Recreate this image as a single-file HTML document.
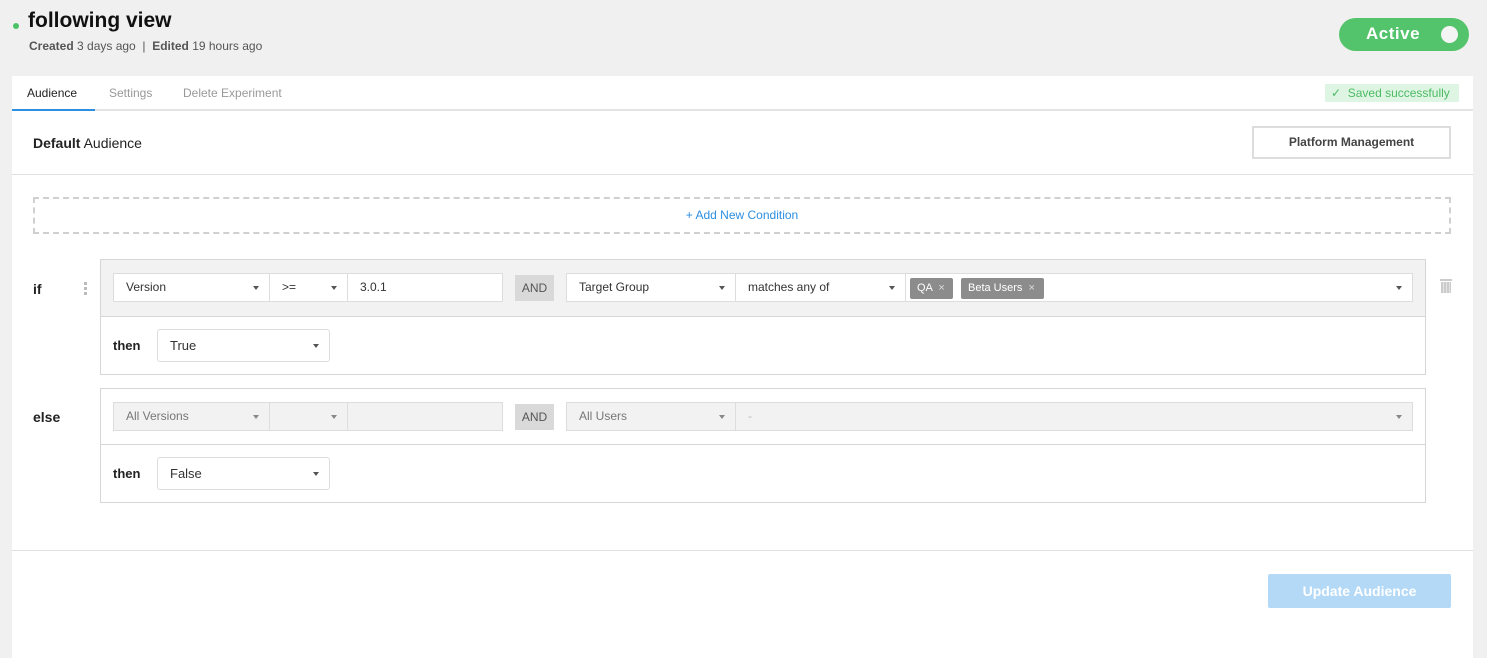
<!DOCTYPE html>
<html><head><style>
*{box-sizing:border-box;margin:0;padding:0}
body{width:1487px;height:658px;background:#f0f0f0;font-family:"Liberation Sans",sans-serif;position:relative;overflow:hidden;color:#222}
.a{position:absolute}
.sel{position:absolute;background:#fff;border:1px solid #ddd;height:29px;font-size:12px;color:#333;line-height:27px;padding-left:12px}
.sel.dis{background:#f2f2f2;color:#777}
.car{position:absolute;right:10px;top:12px;width:0;height:0;border-left:3.5px solid transparent;border-right:3.5px solid transparent;border-top:4px solid #555}
.dis .car{border-top-color:#888}
.and{position:absolute;background:#d9d9d9;color:#555;font-size:12px;width:39px;height:26px;line-height:26px;text-align:center}
.tag{position:absolute;top:4px;height:21px;background:#8c8c8c;color:#fff;font-size:11px;line-height:21px;padding-left:7px;border-radius:2px}
.lbl{position:absolute;font-size:13px;font-weight:bold;color:#222}
</style></head><body>
<div class="a" style="left:13px;top:23px;width:6px;height:6px;border-radius:50%;background:#4cc264"></div>
<div class="a" style="left:28px;top:9px;font-size:21px;font-weight:bold;color:#111">following view</div>
<div class="a" style="left:29px;top:39px;font-size:12px;color:#555"><b>Created</b> 3 days ago &nbsp;| &nbsp;<b>Edited</b> 19 hours ago</div>
<div class="a" style="left:1339px;top:18px;width:130px;height:33px;border-radius:17px;background:#54c46c"></div>
<div class="a" style="left:1366px;top:24px;font-size:17px;line-height:20px;font-weight:bold;color:#fff;letter-spacing:0.5px">Active</div>
<div class="a" style="left:1441px;top:26px;width:17px;height:17px;border-radius:50%;background:#f4f4f4"></div>

<div class="a" style="left:12px;top:76px;width:1461px;height:582px;background:#fff"></div>
<div class="a" style="left:12px;top:109px;width:1461px;height:2px;background:#e3e3e3"></div>
<div class="a" style="left:12px;top:109px;width:83px;height:2px;background:#2c8fe0"></div>
<div class="a" style="left:27px;top:86px;font-size:12px;color:#222">Audience</div>
<div class="a" style="left:109px;top:86px;font-size:12px;color:#999">Settings</div>
<div class="a" style="left:183px;top:86px;font-size:12px;color:#999">Delete Experiment</div>
<div class="a" style="left:1325px;top:84px;width:134px;height:18px;background:#dff5e4;font-size:12px;color:#4cba62;line-height:18px;padding-left:6px">✓&nbsp; Saved successfully</div>

<div class="a" style="left:33px;top:135px;font-size:14px;color:#222"><b>Default</b> Audience</div>
<div class="a" style="left:1252px;top:126px;width:199px;height:33px;border:2px solid #ddd;font-size:12px;font-weight:bold;color:#444;text-align:center;line-height:29px">Platform Management</div>
<div class="a" style="left:12px;top:174px;width:1461px;height:1px;background:#e0e0e0"></div>

<div class="a" style="left:33px;top:197px;width:1418px;height:37px;border:2px dashed #d0d0d0;text-align:center;line-height:33px;font-size:12px;color:#2c8fe0">+ Add New Condition</div>

<div class="lbl" style="left:33px;top:281px;font-size:14px">if</div>
<div class="a" style="left:84px;top:282px;width:3px;height:14px;background:repeating-linear-gradient(#bbb 0 3px,transparent 3px 5px)"></div>
<div class="a" style="left:100px;top:259px;width:1326px;height:116px;border:1px solid #d6d6d6;background:#fff"></div>
<div class="a" style="left:101px;top:260px;width:1324px;height:57px;background:#f2f2f2;border-bottom:1px solid #d6d6d6"></div>
<div class="sel" style="left:113px;top:273px;width:157px">Version<span class="car"></span></div>
<div class="sel" style="left:269px;top:273px;width:79px">&gt;=<span class="car"></span></div>
<div class="sel" style="left:347px;top:273px;width:156px">3.0.1</div>
<div class="and" style="left:515px;top:275px">AND</div>
<div class="sel" style="left:566px;top:273px;width:170px">Target Group<span class="car"></span></div>
<div class="sel" style="left:735px;top:273px;width:171px">matches any of<span class="car"></span></div>
<div class="sel" style="left:905px;top:273px;width:508px;padding-left:0">
<span class="tag" style="left:4px;width:43px">QA <span style="color:#ddd;margin-left:3px">×</span></span>
<span class="tag" style="left:55px;width:83px">Beta Users <span style="color:#ddd;margin-left:3px">×</span></span>
<span class="car"></span></div>
<div class="a" style="left:1440px;top:279px;width:12px;height:2px;background:#ccc"></div>
<div class="a" style="left:1441px;top:282px;width:10px;height:11px;background:repeating-linear-gradient(90deg,#ccc 0 2px,#e2e2e2 2px 3px)"></div>
<div class="lbl" style="left:113px;top:338px">then</div>
<div class="sel" style="left:157px;top:329px;width:173px;height:33px;line-height:31px;font-size:13px;border-radius:3px">True<span class="car" style="top:14px"></span></div>

<div class="lbl" style="left:33px;top:409px;font-size:14px">else</div>
<div class="a" style="left:100px;top:388px;width:1326px;height:115px;border:1px solid #d6d6d6;background:#fff"></div>
<div class="a" style="left:101px;top:389px;width:1324px;height:56px;background:#fff;border-bottom:1px solid #d6d6d6"></div>
<div class="sel dis" style="left:113px;top:402px;width:157px">All Versions<span class="car"></span></div>
<div class="sel dis" style="left:269px;top:402px;width:79px"><span class="car"></span></div>
<div class="sel dis" style="left:347px;top:402px;width:156px"></div>
<div class="and" style="left:515px;top:404px">AND</div>
<div class="sel dis" style="left:566px;top:402px;width:170px">All Users<span class="car"></span></div>
<div class="sel dis" style="left:735px;top:402px;width:678px;color:#bbb">-<span class="car"></span></div>
<div class="lbl" style="left:113px;top:466px">then</div>
<div class="sel" style="left:157px;top:457px;width:173px;height:33px;line-height:31px;font-size:13px;border-radius:3px">False<span class="car" style="top:14px"></span></div>

<div class="a" style="left:12px;top:550px;width:1461px;height:1px;background:#e0e0e0"></div>
<div class="a" style="left:1268px;top:574px;width:183px;height:34px;background:#b3d9f7;border-radius:2px;color:#fff;font-size:14px;font-weight:bold;text-align:center;line-height:34px">Update Audience</div>
</body></html>
